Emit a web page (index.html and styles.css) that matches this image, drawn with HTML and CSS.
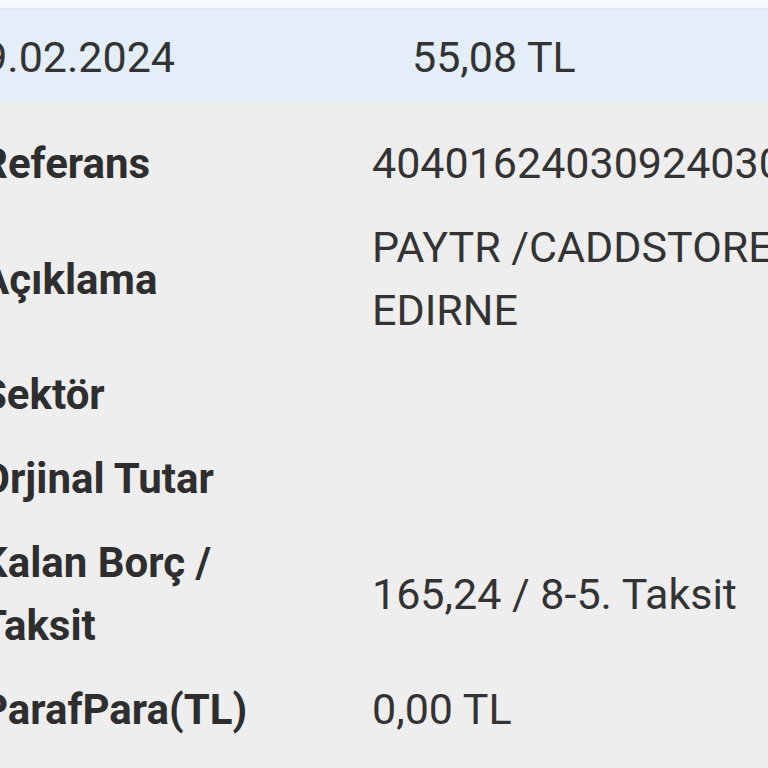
FILE: index.html
```html
<!DOCTYPE html>
<html lang="tr">
<head>
<meta charset="utf-8">
<link rel="stylesheet" href="styles.css">
</head>
<body>
<div class="topbar"></div>
<div class="summary">
  <div class="summary-date">09.02.2024</div>
  <div class="summary-amount">55,08 TL</div>
</div>
<div class="details">
  <div class="row">
    <div class="label">Referans</div>
    <div class="value nowrap">40401624030924030600</div>
  </div>
  <div class="row">
    <div class="label">Açıklama</div>
    <div class="value">PAYTR /CADDSTORE EDIRNE</div>
  </div>
  <div class="row">
    <div class="label">Sektör</div>
    <div class="value"></div>
  </div>
  <div class="row">
    <div class="label">Orjinal Tutar</div>
    <div class="value"></div>
  </div>
  <div class="row">
    <div class="label">Kalan Borç / Taksit</div>
    <div class="value">165,24 / 8-5. Taksit</div>
  </div>
  <div class="row">
    <div class="label">ParafPara(TL)</div>
    <div class="value">0,00 TL</div>
  </div>
</div>
</body>
</html>
```

FILE: styles.css
```css
html, body {
  margin: 0;
  padding: 0;
}
body {
  background: #eeeeee;
  overflow: hidden;
  width: 768px;
  height: 768px;
  font-family: Roboto, "Noto Sans", sans-serif;
  font-size: 43px;
  color: #333333;
}
.topbar {
  height: 8px;
  background: #f7fafd;
  border-bottom: 2px solid #dbe7ef;
}
.summary {
  display: flex;
  align-items: center;
  background: #e4eef8;
  padding: 16px 0 14px;
  margin-left: -41px;
  line-height: 63px;
  white-space: nowrap;
}
.summary-date {
  width: 453px;
  flex: none;
}
.summary-amount {
  flex: none;
}
.details {
  padding-top: 19px;
  margin-left: -19px;
}
.row {
  display: grid;
  grid-template-columns: 320px 420px;
  column-gap: 71px;
  align-items: center;
  padding: 10px 0 11px;
  line-height: 63px;
  min-height: 63px;
}
.label {
  font-size: 42px;
  font-weight: 700;
  color: #2e2e2e;
}
.value {
  font-weight: 400;
  color: #333333;
}
.nowrap {
  white-space: nowrap;
}
```
